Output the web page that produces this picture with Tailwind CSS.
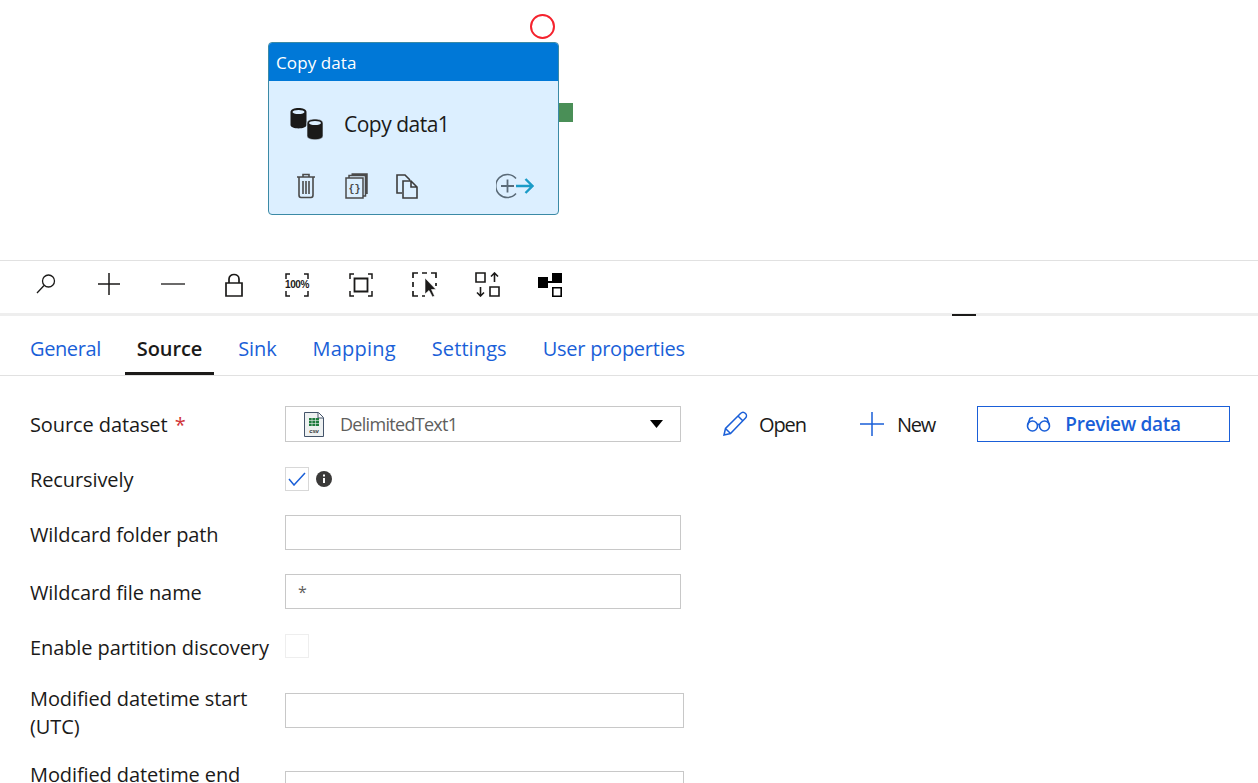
<!DOCTYPE html>
<html lang="en">
  <head>
    <meta charset="UTF-8" />
    <title>Copy data</title>
    <script src="https://cdn.jsdelivr.net/npm/@tailwindcss/browser@4"></script>
  </head>
  <body class="bg-white h-[783px] overflow-hidden font-['Open_Sans',sans-serif] text-[#1b1a19]">
    <!-- Canvas -->
    <div class="relative h-[260px]">
      <div class="absolute left-[530px] top-[14px] w-[25px] h-[25px] rounded-full border-2 border-[#f5222d] bg-white"></div>
      <div class="absolute left-[558px] top-[103px] w-[15px] h-[19px] bg-[#4a8f57]"></div>
      <div class="absolute left-[268px] top-[42px] w-[291px] h-[173px] rounded-[4px] border border-[#3b8aa6] bg-[#dcefff] overflow-hidden flex flex-col">
        <div class="h-[38px] bg-[#0078d7] text-white text-[17px] tracking-[0.1px] pl-[7px] pt-[2px] flex items-center shrink-0">Copy data</div>
        <div class="flex items-center h-[87px] pl-[21px] shrink-0">
          <svg class="shrink-0" width="34" height="33" viewBox="0 0 34 33" fill="#1b1a19">
            <path d="M.5 4c0-5.300 16-5.300 16 0v13c0 4.500-16 4.500-16 0z"/>
            <ellipse cx="8.500" cy="4" rx="6" ry="2" fill="#dcefff"/>
            <path d="M17 15c0-5.300 16-5.300 16 0v13c0 5-16 5-16 0z" stroke="#dcefff" stroke-width=".6"/>
            <ellipse cx="25" cy="15" rx="6" ry="2" fill="#dcefff"/>
          </svg>
          <span class="ml-[20px] text-[21px] tracking-[-0.5px] text-[#1b1a19]">Copy data1</span>
        </div>
        <div class="flex items-center pl-[27px] mt-[5px]">
          <svg width="20" height="26" viewBox="0 0 20 26" fill="none" stroke="#4a4a4a" stroke-width="1.6">
            <path d="M1 4h18M7 4V1.500h6V4M3 4v18c0 1.500 1 2.500 2 2.500h10c1 0 2-1 2-2.500V4M7 8v13M10 8v13M13 8v13"/>
          </svg>
          <svg class="ml-[29px]" width="23" height="26" viewBox="0 0 23 26" fill="none" stroke="#4a4a4a" stroke-width="1.5">
            <path d="M1 5h17v20H1zM4 5V2.500h16.500V23H18M6.500 1h15.500v20"/>
            <text x="9.500" y="19" font-size="10" font-weight="700" fill="#4a4a4a" stroke="none" text-anchor="middle" font-family="'Liberation Mono',monospace">{}</text>
          </svg>
          <svg class="ml-[28px]" width="23" height="25" viewBox="0 0 23 25" fill="none" stroke="#3c3c3c" stroke-width="1.600">
            <path d="M6 19H1V1h8l5 5M7 7h8l6 6v11H7zM15 7v6h6"/>
          </svg>
          <svg class="ml-[77px]" width="38" height="26" viewBox="0 0 38 26" fill="none">
            <path d="M20 5.500a11.500 11.500 0 1 0 0 15" stroke="#5b6b78" stroke-width="1.500"/>
            <path d="M5 13h13M11.500 6.500v13" stroke="#5b6b78" stroke-width="1.800"/>
            <path d="M20 13h16M29.500 6l7 7-7 7" stroke="#1a9bc7" stroke-width="2.400"/>
          </svg>
        </div>
      </div>
    </div>

    <!-- Toolbar -->
    <div class="h-[53px] border-t border-[#e1e1e1] flex items-center pl-[36px] pb-[5px]">
      <svg class="mt-[-2px]" width="20" height="20" viewBox="0 0 20 20" fill="none" stroke="#1b1a19" stroke-width="1.300"><circle cx="12.500" cy="7" r="6"/><path d="M8 11.500 1 19"/></svg>
      <svg class="ml-[42px] mt-[-2px]" width="22" height="22" viewBox="0 0 22 22" stroke="#1b1a19" stroke-width="1.500"><path d="M0 11h22M11 0v22"/></svg>
      <svg class="ml-[41px] mt-[-2px]" width="24" height="22" viewBox="0 0 24 22" stroke="#1b1a19" stroke-width="1.300"><path d="M0 11h24"/></svg>
      <svg class="ml-[40px]" width="18" height="24" viewBox="0 0 18 24" fill="none" stroke="#1b1a19" stroke-width="1.700"><path d="M1 10h16v13H1zM4 10V6c0-6 10-6 10 0v4"/></svg>
      <div class="relative ml-[42px] w-[24px] h-[24px] text-[10px] font-bold font-['Liberation_Sans',sans-serif] flex items-center justify-center tracking-[-0.4px] whitespace-nowrap">
        100%
        <svg class="absolute inset-0" width="24" height="24" viewBox="0 0 24 24" fill="none" stroke="#1b1a19" stroke-width="1.500"><path d="M1 6V1h4M19 1h4v5M23 18v5h-4M5 23H1v-5"/></svg>
      </div>
      <svg class="ml-[40px]" width="24" height="24" viewBox="0 0 24 24" fill="none" stroke="#1b1a19" stroke-width="1.500"><path d="M1 6V1h4M19 1h4v5M23 18v5h-4M5 23H1v-5"/><path d="M5.500 5.500h13v13h-13z" stroke-width="1.800"/></svg>
      <svg class="ml-[39px]" width="26" height="26" viewBox="0 0 26 26" fill="none" stroke="#1b1a19" stroke-width="1.700"><path d="M1 6V1h5M10 1h5M19 1h5v5M1 10v5M1 19v5h5M10 24h3"/><path d="M13 6v16l4-3.500 3.500 6.500 2-1-3-6.500h4.500z" fill="#1b1a19" stroke="#fff" stroke-width=".6"/><path d="M24 11v3" /></svg>
      <svg class="ml-[37px]" width="26" height="25" viewBox="0 0 26 25" fill="none" stroke="#1b1a19" stroke-width="1.600"><path d="M1 1h9v9H1zM15 15h9v9h-9zM19.500 10V1M16 4.500 19.500 1 23 4.500M5.500 15v9M2 20.500 5.500 24 9 20.500"/></svg>
      <svg class="ml-[37px]" width="26" height="24" viewBox="0 0 26 24" fill="#000"><path d="M0 4h10v11H0zM14 0h10v10H14zM10 8h4v2h-4z"/><path d="M14.800 14.800h8.400v8.400h-8.400z" fill="none" stroke="#000" stroke-width="1.600"/></svg>
    </div>

    <!-- Splitter -->
    <div class="h-[3px] bg-[#eeeeee] relative">
      <div class="absolute left-[952px] top-[1px] w-[24px] h-[2px] bg-[#1b1a19]"></div>
    </div>

    <!-- Tabs -->
    <div class="h-[60px] border-b border-[#e1e1e1] flex pl-[30px] gap-[36px] text-[20px] text-[#1a5fd8] leading-[28px] pt-[19px]">
      <span class="tracking-[-0.4px]">General</span>
      <span class="relative text-[#1b1a19] font-semibold tracking-[-0.1px]">Source<span class="absolute left-[-12px] right-[-12px] top-[37px] h-[3px] bg-[#1b1a19]"></span></span>
      <span class="tracking-[-0.1px]">Sink</span>
      <span class="tracking-[0.2px]">Mapping</span>
      <span class="tracking-[0.1px]">Settings</span>
      <span class="tracking-[-0.25px]">User properties</span>
    </div>

    <!-- Form -->
    <div class="pl-[30px] text-[20px] tracking-[-0.1px] text-[#1b1a19] leading-[28px]">
      <div class="flex items-center mt-[30px] h-[36px]">
        <label class="w-[255px] shrink-0 pt-[2px]">Source dataset <span class="text-[#d13438] ml-[2px]">*</span></label>
        <div class="w-[396px] shrink-0 h-[36px] border border-[#c8c8c8] flex items-center pl-[18px] pr-[17px]">
          <svg width="20" height="25" viewBox="0 0 20 25"><path d="M.5.500h14l5 5v19H.5z" fill="#eef1f1" stroke="#44546a"/><path d="M14 1v5h5" fill="#fff" stroke="#44546a"/><path d="M5 6h10v8H5z" fill="#1e7b3d"/><path d="M5 8.500h10M5 11.500h10M8 6v8M11.500 6v8" stroke="#eef1f1" stroke-width=".6"/><text x="10" y="21" font-size="6" font-weight="700" fill="#333" text-anchor="middle" font-family="'Liberation Sans',sans-serif">csv</text></svg>
          <span class="ml-[16px] text-[18px] text-[#605e5c] tracking-[-0.7px]">DelimitedText1</span>
          <svg class="ml-auto" width="13" height="8" viewBox="0 0 13 8"><path d="M0 0h13L6.500 8z" fill="#000"/></svg>
        </div>
        <div class="flex items-center ml-[41px]">
          <svg width="26" height="26" viewBox="0 0 26 26" fill="none" stroke="#1a5fd8" stroke-width="1.500"><path d="M2 24l1.500-6.500L18.500 2.500c1.500-1.500 3.500-1.500 5 0s1 3.500 0 4.500L8.500 22.500zM3.500 17.500l5 5M16 5l5 5"/></svg>
          <span class="ml-[11px] pt-[2px] tracking-[-1.1px]">Open</span>
          <svg class="ml-[54px]" width="24" height="24" viewBox="0 0 24 24" stroke="#1a5fd8" stroke-width="1.500"><path d="M0 12h24M12 0v24"/></svg>
          <span class="ml-[13px] pt-[2px] tracking-[-1.2px]">New</span>
          <button class="ml-[42px] w-[253px] h-[36px] border border-[#1a5fd8] flex items-center justify-center font-semibold text-[#1a5fd8] text-[19px] tracking-[-0.3px]">
            <svg width="25" height="16" viewBox="0 0 25 16" fill="none" stroke="#1a5fd8" stroke-width="1.600"><circle cx="6.500" cy="10" r="5"/><circle cx="18.500" cy="10" r="5"/><path d="M11.500 9c.8-1 1.200-1 2 0M1.500 9 4 2.500 7 1.500M23.500 9 21 2.500 18 1.500"/></svg>
            <span class="ml-[14px]">Preview data</span>
          </button>
        </div>
      </div>

      <div class="flex items-center mt-[24px] h-[26px]">
        <label class="w-[255px] shrink-0 pt-[2px]">Recursively</label>
        <div class="w-[24px] h-[24px] border border-[#d8d8d8] flex items-center justify-center">
          <svg width="18" height="14" viewBox="0 0 18 14" fill="none" stroke="#1a5fd8" stroke-width="1.500"><path d="M1 7l5 6L17 1"/></svg>
        </div>
        <svg class="ml-[7px]" width="16" height="16" viewBox="0 0 16 16"><circle cx="8" cy="8" r="8" fill="#3b3a39"/><path d="M7 7h2v5H7zM7 3.500h2v2H7z" fill="#fff"/></svg>
      </div>

      <div class="flex items-center mt-[23px] h-[35px]">
        <label class="w-[255px] shrink-0 pt-[4px]">Wildcard folder path</label>
        <input class="w-[396px] h-[35px] border border-[#c8c8c8]" />
      </div>

      <div class="flex items-center mt-[24px] h-[35px]">
        <label class="w-[255px] shrink-0 pt-[2px]">Wildcard file name</label>
        <input class="w-[396px] h-[35px] border border-[#c8c8c8] pl-[12px] text-[16px] text-[#605e5c]" value="*" />
      </div>

      <div class="flex items-center mt-[25px] h-[24px]">
        <label class="w-[255px] shrink-0 whitespace-nowrap pt-[4px]">Enable partition discovery</label>
        <div class="w-[24px] h-[24px] border border-[#eeeeee]"></div>
      </div>

      <div class="flex items-center mt-[25px] h-[55px]">
        <label class="w-[255px] shrink-0 pt-[4px]">Modified datetime start (UTC)</label>
        <input class="w-[399px] h-[35px] border border-[#c8c8c8]" />
      </div>

      <div class="flex items-start mt-[23px]">
        <label class="w-[255px] shrink-0">Modified datetime end (UTC)</label>
        <input class="w-[399px] h-[35px] border border-[#c8c8c8] mt-[10px]" />
      </div>
    </div>
  </body>
</html>
